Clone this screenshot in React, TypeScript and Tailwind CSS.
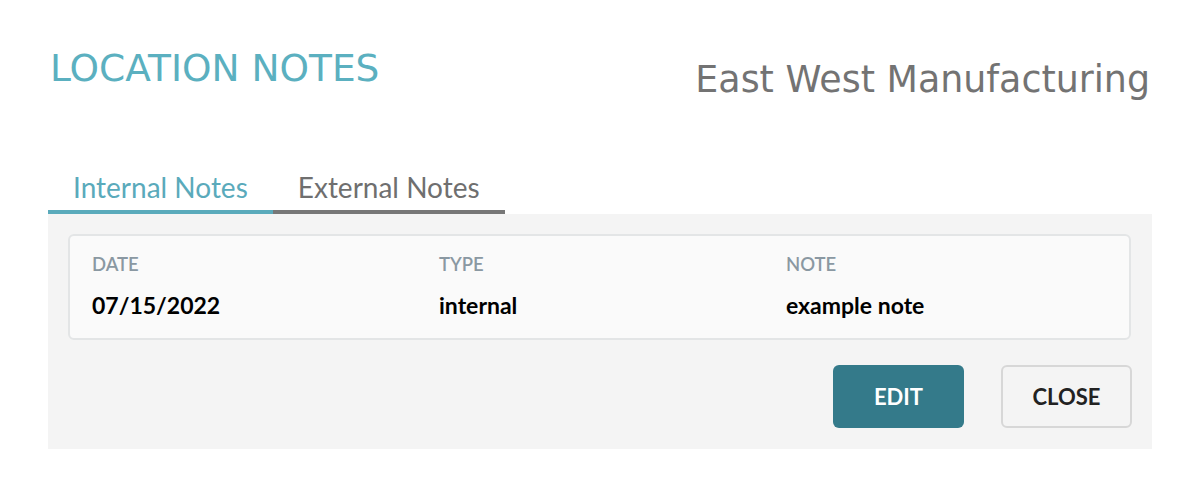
import React, { useState } from 'react';

const notes = [{ date: '07/15/2022', type: 'internal', note: 'example note' }];

const App: React.FC = () => {
  const [tab, setTab] = useState<'internal' | 'external'>('internal');

  return (
    <div className="min-h-screen w-full bg-white font-['Lato',sans-serif]">
      <div className="px-[48px] pt-[48px]">
        <div className="flex items-start justify-between">
          <h1 className="font-['DejaVu_Sans',sans-serif] text-[37.5px] leading-none text-[#5bb0c0] pt-[2px] pl-[2px]">
            LOCATION NOTES
          </h1>
          <div className="font-['DejaVu_Sans',sans-serif] text-[36.4px] leading-none text-[#737373] pt-[14px] -mr-[4px]">
            East West Manufacturing
          </div>
        </div>

        <div className="mt-[72px] flex">
          <button
            onClick={() => setTab('internal')}
            className={`px-[25px] pb-[6px] text-[28px] leading-[34px] border-b-4 ${
              tab === 'internal' ? 'text-[#5aaabb] border-[#5aaabb]' : 'text-[#6f6f6f] border-[#777777]'
            }`}
          >
            Internal Notes
          </button>
          <button
            onClick={() => setTab('external')}
            className={`px-[25px] pb-[6px] text-[28px] leading-[34px] border-b-4 ${
              tab === 'external' ? 'text-[#5aaabb] border-[#5aaabb]' : 'text-[#6f6f6f] border-[#777777]'
            }`}
          >
            External Notes
          </button>
        </div>

        <div className="w-[1104px] bg-[#f4f4f4] px-[20px] pt-[20px] pb-[21px]">
          <div className="w-[1063px] h-[106px] rounded-[6px] border-2 border-[#e3e5e6] bg-[#fafafa] pl-[22px] pt-[16px]">
            {notes.map((n) => (
              <div key={n.date} className="grid grid-cols-[347px_347px_347px]">
                <div>
                  <div className="text-[18.5px] leading-[24px] font-semibold text-[#8a98a2]">DATE</div>
                  <div className="mt-[14px] text-[23px] leading-[30px] font-bold text-black">{n.date}</div>
                </div>
                <div>
                  <div className="text-[18.5px] leading-[24px] font-semibold text-[#8a98a2]">TYPE</div>
                  <div className="mt-[14px] text-[23px] leading-[30px] font-bold text-black">{n.type}</div>
                </div>
                <div>
                  <div className="text-[18.5px] leading-[24px] font-semibold text-[#8a98a2]">NOTE</div>
                  <div className="mt-[14px] text-[23px] leading-[30px] font-bold text-black">{n.note}</div>
                </div>
              </div>
            ))}
          </div>

          <div className="mt-[25px] flex justify-end gap-[37px]">
            <button className="w-[131px] h-[63px] rounded-[6px] bg-[#347a8a] text-white text-[22px] font-bold">
              EDIT
            </button>
            <button className="w-[131px] h-[63px] rounded-[6px] border-2 border-[#d7d7d7] bg-[#f4f4f4] text-[#222222] text-[22px] font-bold">
              CLOSE
            </button>
          </div>
        </div>
      </div>
    </div>
  );
};

export default App;
